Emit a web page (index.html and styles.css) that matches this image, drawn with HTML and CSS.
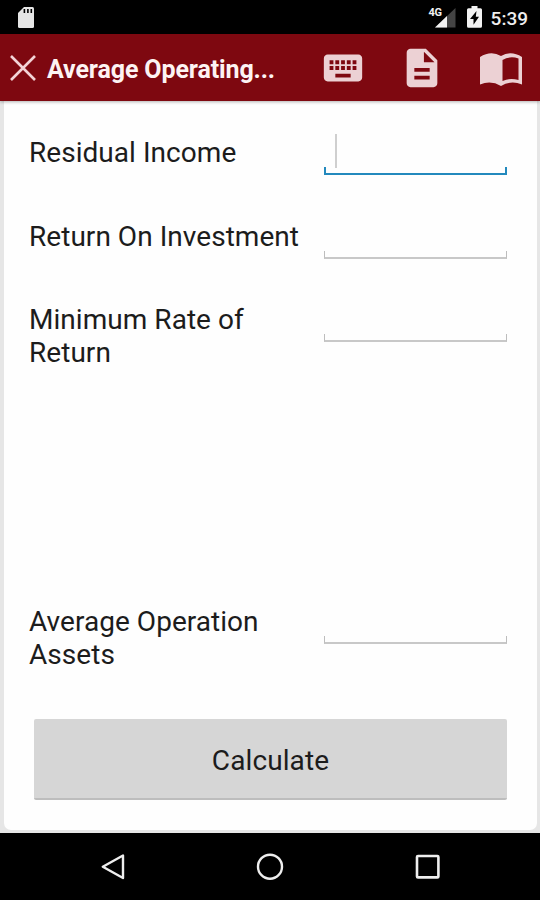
FILE: index.html
```
<!DOCTYPE html>
<html lang="en">
<head>
    <meta charset="UTF-8">
    <meta name="viewport" content="width=device-width, initial-scale=1.0">
    <title>Average Operating Assets</title>
    <link rel="stylesheet" href="styles.css">
</head>
<body>

    <div class="status-bar">
        <svg class="sd-card" width="16" height="21" viewBox="0 0 16 21">
            <path fill="#e6e6e6" d="M6 0h8.5Q16 0 16 1.5v18q0 1.5-1.5 1.5h-13Q0 21 0 19.5V6z"/>
            <path stroke="#000" stroke-width="1.6" d="M6.4 2v4M9.9 2v4M13.3 2v4"/>
        </svg>
        <div class="status-icons">
            <div class="signal">
                <svg width="21" height="20" viewBox="0 0 21 20">
                    <path fill="#444" d="M20.5 0v19.5H0z"/>
                    <path fill="#f2f2f2" d="M12 8v11.5H0z"/>
                </svg>
                <span class="network">4G</span>
            </div>
            <svg class="battery" width="15" height="22" viewBox="0 0 15 22">
                <path fill="#f2f2f2" d="M4.5 0h6v2.2h3Q15 2.2 15 3.7v16.6q0 1.5-1.5 1.5h-12Q0 21.8 0 20.3V3.7q0-1.5 1.5-1.5h3z"/>
                <path fill="#000" d="M9.5 5L3 13h3.500v5.800L12 10.800H8.800z"/>
            </svg>
            <span class="time">5:39</span>
        </div>
    </div>

    <header>
        <svg class="close" width="26" height="26" viewBox="0 0 26 26">
            <path stroke="#f3d3d6" stroke-width="2.6" d="M1 1l24 24M25 1L1 25"/>
        </svg>
        <h1>Average Operating...</h1>
        <nav>
            <svg width="46" height="46" viewBox="0 0 24 24">
                <path fill="#ecd1d4" d="M20 5H4c-1.1 0-1.990.9-1.990 2L2 17c0 1.100.9 2 2 2h16c1.100 0 2-.9 2-2V7c0-1.100-.9-2-2-2zm-9 3h2v2h-2V8zm0 3h2v2h-2v-2zM8 8h2v2H8V8zm0 3h2v2H8v-2zm-1 2H5v-2h2v2zm0-3H5V8h2v2zm9 7H8v-2h8v2zm0-4h-2v-2h2v2zm0-3h-2V8h2v2zm3 3h-2v-2h2v2zm0-3h-2V8h2v2z"/>
            </svg>
            <svg width="46" height="46" viewBox="0 0 24 24">
                <path fill="#ecd1d4" d="M14 2H6c-1.100 0-1.990.9-1.990 2L4 20c0 1.100.89 2 1.990 2H18c1.100 0 2-.9 2-2V8l-6-6zm2 16H8v-2h8v2zm0-4H8v-2h8v2zm-3-5V3.500L18.500 9H13z"/>
            </svg>
            <svg class="book" width="42" height="34" viewBox="0 0 42 34">
                <path fill="#ecd1d4" d="M0 4Q11-3 21 3Q31-3 42 4V31.500Q31 27 21 33Q11 27 0 31.500z"/>
                <path fill="#7e0810" d="M22.500 7Q30 2.500 38.500 5.500V27Q30 24.500 22.500 28z"/>
            </svg>
        </nav>
    </header>

    <main>
        <form class="card">
            <div class="row">
                <label for="income">Residual Income</label>
                <div class="field active"><input type="text" id="income"></div>
            </div>
            <div class="row">
                <label for="roi">Return On Investment</label>
                <div class="field"><input type="text" id="roi"></div>
            </div>
            <div class="row">
                <label for="rate">Minimum Rate of Return</label>
                <div class="field"><input type="text" id="rate"></div>
            </div>
            <div class="row result">
                <label for="assets">Average Operation Assets</label>
                <div class="field"><input type="text" id="assets"></div>
            </div>
            <button type="button">Calculate</button>
        </form>
    </main>

    <footer>
        <svg width="26" height="28" viewBox="0 0 26 28">
            <path fill="none" stroke="#eee" stroke-width="2.4" stroke-linejoin="round" d="M3.800 13.700L24 2.500v22.500z"/>
        </svg>
        <svg width="28" height="28" viewBox="0 0 28 28">
            <circle cx="14" cy="13.700" r="12" fill="none" stroke="#eee" stroke-width="2.400"/>
        </svg>
        <svg width="26" height="28" viewBox="0 0 26 28">
            <rect x="2" y="3" width="21.400" height="21.400" rx="1" fill="none" stroke="#eee" stroke-width="2.600"/>
        </svg>
    </footer>

</body>
</html>
```
FILE: styles.css
```
* {
    box-sizing: border-box;
}

body {
    font-family: Roboto, sans-serif;
    margin: 0;
    height: 900px;
    display: flex;
    flex-direction: column;
    background-color: #000;
    color: #1c1c1c;
    overflow: hidden;
}

svg {
    display: block;
    flex: none;
}

.status-bar {
    height: 34px;
    display: flex;
    justify-content: space-between;
    align-items: flex-start;
    padding: 7px 12px 0 18px;
    background-color: #000;
}

.status-icons {
    display: flex;
    align-items: flex-start;
}

.signal {
    position: relative;
    margin: 1px 11px 0 0;
}

.network {
    position: absolute;
    left: -6px;
    top: 0;
    font-size: 11px;
    line-height: 10px;
    font-weight: bold;
    letter-spacing: -0.5px;
    color: #f2f2f2;
    background-color: #000;
}

.battery {
    margin-top: -1px;
}

.time {
    margin-left: 9px;
    font-size: 19px;
    line-height: 24px;
    font-weight: 500;
    color: #eee;
}

header {
    height: 67px;
    display: flex;
    align-items: center;
    padding: 0 18px 0 10px;
    background-color: #7e0810;
    box-shadow: 0 1px 3px rgba(0, 0, 0, 0.3);
    z-index: 1;
}

header h1 {
    flex: 1;
    margin: 4px 0 0 11px;
    font-size: 25px;
    line-height: 30px;
    font-weight: bold;
    letter-spacing: -0.12px;
    white-space: nowrap;
    color: #fdf3f3;
}

nav {
    display: flex;
    align-items: center;
    gap: 33px;
}

.book {
    margin-left: 2px;
    margin-top: 4px;
}

main {
    height: 732px;
    padding: 0 3px 3px 4px;
    background-color: #e6e6e6;
}

.card {
    height: 729px;
    padding: 35px 30px 0 25px;
    background-color: #fefefe;
    border-radius: 0 0 7px 7px;
}

.row {
    display: flex;
    justify-content: space-between;
    align-items: flex-start;
    height: 83.6px;
}

.row label {
    width: 275px;
    font-size: 28px;
    line-height: 33px;
    letter-spacing: 0.04px;
}

.field {
    position: relative;
    width: 183px;
    height: 39px;
}

/* the underline turns up at both ends */
.field::after {
    content: "";
    position: absolute;
    left: 0;
    right: 0;
    bottom: 0;
    height: 6px;
    border: 1px solid #bdbdbd;
    border-bottom: 2px solid #c8c8c8;
    border-top: none;
}

.field.active::after {
    border-color: #2389bd;
    border-width: 0 2px 2px;
}

/* text cursor */
.field.active::before {
    content: "";
    position: absolute;
    left: 11px;
    top: -2px;
    width: 2px;
    height: 34px;
    background-color: #cfcfcf;
}

.field input {
    width: 100%;
    height: 33px;
    padding: 0 12px;
    border: none;
    outline: none;
    background: none;
    font: inherit;
    font-size: 28px;
}

.row.result {
    margin-top: 218px;
    height: 114px;
}

button {
    display: block;
    width: 473px;
    height: 81px;
    margin-left: 5px;
    padding: 4px 0 0;
    border: none;
    border-bottom: 2px solid #bdbdbd;
    border-radius: 2px;
    background-color: #d6d6d6;
    color: #1c1c1c;
    font-family: inherit;
    font-size: 28px;
    letter-spacing: 0.1px;
}

footer {
    height: 67px;
    display: flex;
    justify-content: center;
    align-items: center;
    gap: 131px;
    background-color: #000;
}
```
